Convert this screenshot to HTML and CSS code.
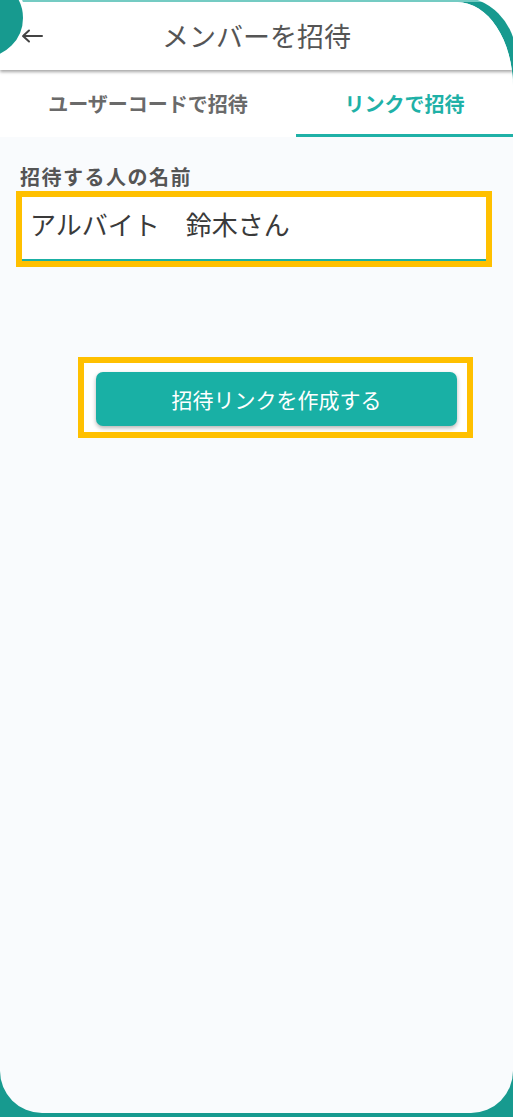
FILE: index.html
```html
<!DOCTYPE html>
<html lang="ja">
<head>
<meta charset="utf-8">
<title>メンバーを招待</title>
<link rel="stylesheet" href="styles.css">
</head>
<body>
<div class="frame">
  <div class="screen">
    <header class="appbar">
      <span class="back">
        <svg width="22" height="14" viewBox="0 0 22 14"><path d="M21 7H2.5M8 1.5L2 7l6 5.5" fill="none" stroke="#444" stroke-width="2" stroke-linecap="round" stroke-linejoin="round"/></svg>
      </span>
      <h1 class="title">メンバーを招待</h1>
    </header>
    <nav class="tabs">
      <div class="tab">ユーザーコードで招待</div>
      <div class="tab active">リンクで招待</div>
    </nav>
    <main class="content">
      <label class="label">招待する人の名前</label>
      <div class="hl hl-input">
        <div class="field">アルバイト　鈴木さん</div>
      </div>
      <div class="hl hl-button">
        <button class="btn">招待リンクを作成する</button>
      </div>
    </main>
  </div>
  <div class="camera"></div>
</div>
</body>
</html>
```
FILE: styles.css
```css
html, body {
  margin: 0;
  padding: 0;
  background: #ffffff;
  overflow: hidden;
}
body {
  width: 513px;
  height: 1117px;
  font-family: "Noto Sans CJK JP", "Noto Sans", sans-serif;
}
.frame {
  position: relative;
  height: 1121px;
  margin: -4px -3px 0 -3px;
  padding: 6px 3px 4px 3px;
  box-sizing: border-box;
  background: linear-gradient(to bottom, #179a8f 0, #179a8f 4px, #74cbc3 4px, #74cbc3 6px, #179a8f 6px);
  border-top-right-radius: 60px;
  overflow: hidden;
}
.screen {
  height: 100%;
  background: #f9fbfd;
  border-radius: 0 56px 42px 42px / 0 85px 42px 42px;
  overflow: hidden;
  display: flex;
  flex-direction: column;
}
.camera {
  position: absolute;
  z-index: 5;
  left: -55px;
  top: -20px;
  width: 78px;
  height: 78px;
  border-radius: 50%;
  background: #179a8f;
  border: 3px solid #ffffff;
  box-sizing: content-box;
}
.appbar {
  position: relative;
  z-index: 2;
  height: 68px;
  background: #ffffff;
  display: flex;
  align-items: center;
  justify-content: center;
  box-shadow: 0 2px 3px rgba(0, 0, 0, 0.35);
}
.back {
  position: absolute;
  left: 21px;
  top: 27px;
  display: flex;
}
.title {
  margin: 0 0 2px 0;
  font-size: 27px;
  font-weight: 400;
  color: #555555;
  line-height: 1;
}
.tabs {
  display: grid;
  grid-template-columns: 296px 1fr;
  height: 67px;
  background: #ffffff;
}
.tab {
  display: flex;
  align-items: center;
  justify-content: center;
  font-size: 20px;
  font-weight: 700;
  color: #6a6a6a;
  border-bottom: 3px solid transparent;
  box-sizing: border-box;
  padding-top: 2px;
}
.tab.active {
  color: #1fb1a7;
  border-bottom-color: #1fb1a7;
}
.content {
  flex: 1;
  padding: 27px 0 0 0;
  display: flex;
  flex-direction: column;
  align-items: flex-start;
}
.label {
  margin-left: 20px;
  font-size: 20px;
  letter-spacing: 1.5px;
  font-weight: 700;
  color: #555555;
  line-height: 26px;
}
.hl {
  border: 6px solid #ffc000;
  background: #ffffff;
  box-sizing: border-box;
}
.hl-input {
  margin: 1px 0 0 16px;
  width: 476px;
  height: 76px;
}
.field {
  height: 100%;
  box-sizing: border-box;
  border-bottom: 2px solid #1ab0a4;
  padding-left: 8px;
  padding-bottom: 8px;
  display: flex;
  align-items: center;
  font-size: 26px;
  color: #3a3a3a;
  line-height: 1;
}
.hl-button {
  margin: 90px 0 0 78px;
  width: 395px;
  height: 81px;
  padding: 9px 10px 0 12px;
}
.btn {
  display: block;
  width: 361px;
  height: 54px;
  border: 0;
  border-radius: 7px;
  background: #19b0a5;
  color: #ffffff;
  font-family: "Noto Sans CJK JP", "Noto Sans", sans-serif;
  font-size: 21px;
  font-weight: 400;
  box-shadow: 0 2px 4px rgba(0, 0, 0, 0.3);
  padding: 0;
}
```
